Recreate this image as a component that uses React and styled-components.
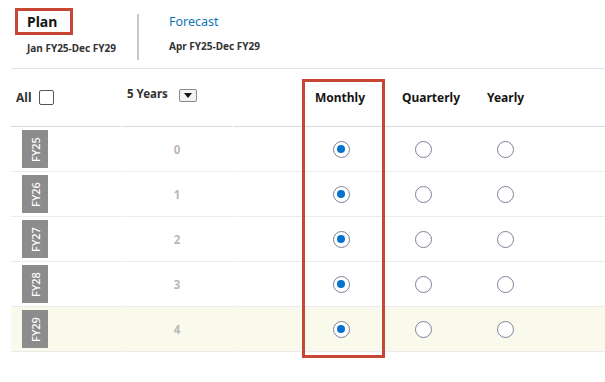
import React from "react";
import styled, { createGlobalStyle } from "styled-components";

const GlobalStyle = createGlobalStyle`
  body {
    margin: 0;
    background: #ffffff;
    font-family: "Noto Sans", "Open Sans", Arial, sans-serif;
    color: #161513;
  }
`;

const Page = styled.div`
  width: 605px;
  height: 382px;
  padding-left: 11px;
  box-sizing: border-box;
  overflow: hidden;
`;

const TopBar = styled.div`
  display: flex;
  align-items: flex-start;
  height: 68px;
  border-bottom: 1px solid #dfe3e8;
  padding-left: 16px;
  box-sizing: content-box;
`;

const Scenario = styled.div`
  display: flex;
  flex-direction: column;
  padding-top: ${(p) => (p.boxed ? "8px" : "12px")};
`;

const Title = styled.span`
  align-self: flex-start;
  font-size: ${(p) => (p.active ? "14px" : "12.5px")};
  font-weight: ${(p) => (p.active ? 700 : 400)};
  color: ${(p) => (p.active ? "#161513" : "#1172b8")};
  line-height: 19px;
  ${(p) =>
    p.active &&
    `
    border: 3px solid #c74634;
    padding: 1px 13px 1px 9px;
    margin-left: -12px;
  `}
`;

const Range = styled.span`
  font-size: 10px;
  font-weight: 700;
  color: #333333;
  margin-top: ${(p) => (p.boxed ? "6px" : "8px")};
`;

const Divider = styled.div`
  width: 2px;
  height: 46px;
  margin: 14px 30px 0 21px;
  background: #c8c8c8;
`;

const Table = styled.div`
  position: relative;
`;

const Row = styled.div`
  display: grid;
  grid-template-columns: 110px 110px 1fr;
  column-gap: 1px;
  background: ${(p) => (p.highlight ? "#f9f9ec" : "transparent")};
`;

const Cell = styled.div`
  display: flex;
  align-items: center;
  justify-content: ${(p) => (p.center ? "center" : "flex-start")};
  height: ${(p) => (p.head ? "57px" : "44px")};
  padding-left: ${(p) => p.pad || 0}px;
  border-bottom: 1px solid ${(p) => (p.head ? "#d9dde3" : "#ebebeb")};
`;

const AllLabel = styled.span`
  font-size: 12px;
  font-weight: 700;
  color: #333;
  margin-right: 8px;
`;

const CheckBox = styled.span`
  width: 13px;
  height: 13px;
  border: 1px solid #555;
  border-radius: 2px;
  background: #fff;
`;

const Years = styled.div`
  display: flex;
  align-items: flex-start;
  gap: 11px;
  margin-top: -8px;
  font-size: 11.5px;
  font-weight: 700;
  color: #333;
`;

const DropButton = styled.span`
  display: flex;
  align-items: center;
  justify-content: center;
  width: 16px;
  height: 11px;
  margin-top: 3px;
  border: 1px solid #8a8a8a;
  border-radius: 2px;
  background: #f1f2f5;
`;

const HeadLabel = styled.span`
  width: 82px;
  box-sizing: border-box;
  padding-left: ${(p) => p.offset}px;
  font-size: 12px;
  font-weight: 700;
  color: #161513;
`;

const YearTag = styled.div`
  align-self: flex-start;
  margin-top: 3px;
  width: 26px;
  height: 38px;
  background: #8c8c8c;
  display: flex;
  align-items: center;
  justify-content: center;
`;

const TagText = styled.span`
  transform: rotate(-90deg);
  color: #ffffff;
  font-size: 11px;
  font-weight: 500;
  white-space: nowrap;
`;

const Count = styled.span`
  font-size: 11.5px;
  font-weight: 700;
  color: #b8b8b8;
`;

const RadioSlot = styled.span`
  width: 82px;
  display: flex;
  justify-content: center;
`;

const Radio = styled.span`
  width: 15px;
  height: 15px;
  border: 1px solid #7d8199;
  border-radius: 50%;
  background: #fff;
  display: flex;
  align-items: center;
  justify-content: center;
  &::after {
    content: "";
    width: 8px;
    height: 8px;
    border-radius: 50%;
    background: ${(p) => (p.checked ? "#0572ce" : "transparent")};
  }
`;

const Highlight = styled.div`
  position: absolute;
  left: 291px;
  top: 10px;
  width: 77px;
  height: 273px;
  border: 3px solid #c74634;
  pointer-events: none;
`;

const years = ["FY25", "FY26", "FY27", "FY28", "FY29"];
const periods = [
  { name: "Monthly", offset: 15 },
  { name: "Quarterly", offset: 20 },
  { name: "Yearly", offset: 23 },
];

export default function App() {
  return (
    <Page>
      <GlobalStyle />
      <TopBar>
        <Scenario boxed>
          <Title active>Plan</Title>
          <Range boxed>Jan FY25-Dec FY29</Range>
        </Scenario>
        <Divider />
        <Scenario>
          <Title>Forecast</Title>
          <Range>Apr FY25-Dec FY29</Range>
        </Scenario>
      </TopBar>
      <Table>
        <Row>
          <Cell head pad={5}>
            <AllLabel>All</AllLabel>
            <CheckBox />
          </Cell>
          <Cell head pad={5}>
            <Years>
              <span>5 Years</span>
              <DropButton>
                <svg width="8" height="5" viewBox="0 0 8 5">
                  <path d="M0 0h8L4 5z" fill="#161513" />
                </svg>
              </DropButton>
            </Years>
          </Cell>
          <Cell head pad={67}>
            {periods.map((p) => (
              <HeadLabel key={p.name} offset={p.offset}>
                {p.name}
              </HeadLabel>
            ))}
          </Cell>
        </Row>
        {years.map((y, i) => (
          <Row key={y} highlight={i === years.length - 1}>
            <Cell pad={11}>
              <YearTag>
                <TagText>{y}</TagText>
              </YearTag>
            </Cell>
            <Cell center>
              <Count>{i}</Count>
            </Cell>
            <Cell pad={67}>
              {periods.map((p, j) => (
                <RadioSlot key={p.name}>
                  <Radio checked={j === 0} />
                </RadioSlot>
              ))}
            </Cell>
          </Row>
        ))}
        <Highlight />
      </Table>
    </Page>
  );
}
